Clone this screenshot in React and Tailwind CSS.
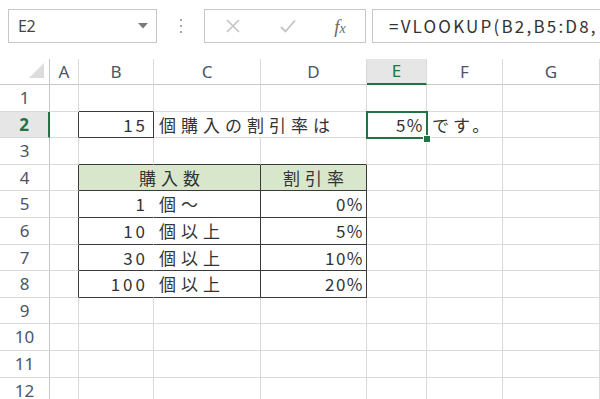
const DARK = 'border-r-[#3a3a3a]';
const cols = ['A', 'B', 'C', 'D', 'E', 'F', 'G'];

const cellFont = 'font-["Noto_Sans_CJK_JP",sans-serif] text-[17px] text-[#333]';

const Cell = ({ children, r = 'grid', b = 'grid', className = '' }) => {
  const rc = r === 'dark' ? DARK : r === 'none' ? 'border-r-white' : 'border-r-[#dadada]';
  const bc = b === 'dark' ? 'border-b-[#3a3a3a]' : 'border-b-[#dadada]';
  return (
    <div className={`flex items-center whitespace-nowrap overflow-visible border-r border-b ${rc} ${bc} ${cellFont} ${className}`}>
      {children}
    </div>
  );
};

const RowHead = ({ n, active }) => (
  <div
    className={`flex items-center justify-center border-b border-b-[#dadada] font-["Noto_Sans",sans-serif] text-[17px] ${
      active
        ? 'bg-[#e6e6e6] border-r-2 border-r-[#217346] text-[#217346] font-bold'
        : 'border-r border-r-[#c6c6c6] text-[#4a5568]'
    }`}
  >
    {n}
  </div>
);

const tiers = [
  ['1', '個〜', '0%'],
  ['10', '個以上', '5%'],
  ['30', '個以上', '10%'],
  ['100', '個以上', '20%'],
];

export default function App() {
  return (
    <div className="w-[600px] h-[399px] overflow-hidden bg-white">
      {/* Formula bar */}
      <div className="h-[59px] flex items-start pt-[9px] pl-2">
        <div className="w-[149px] h-[34px] border border-[#c6c6c6] flex items-center justify-between pl-[9px] pr-[8px]">
          <span className='font-["Noto_Sans",sans-serif] text-[16px] text-[#444] tracking-[-0.5px]'>E2</span>
          <svg width="10" height="6" viewBox="0 0 10 6">
            <path d="M0 0H10L5 5.5Z" fill="#7a7a7a" />
          </svg>
        </div>
        <div className="w-[47px] h-[34px] flex flex-col items-center justify-center gap-[4px]">
          <span className="w-[2px] h-[2px] bg-[#a8a8a8]" />
          <span className="w-[2px] h-[2px] bg-[#a8a8a8]" />
          <span className="w-[2px] h-[2px] bg-[#a8a8a8]" />
        </div>
        <div className="w-[162px] h-[34px] border border-[#c6c6c6] flex items-center">
          <div className="w-[56px] flex justify-center">
            <svg width="14" height="14" viewBox="0 0 14 14">
              <path d="M1 1L13 13M13 1L1 13" stroke="#c4c4c4" strokeWidth="1.6" />
            </svg>
          </div>
          <div className="w-[54px] flex justify-center">
            <svg width="16" height="14" viewBox="0 0 16 14">
              <path d="M1 8L5.5 12.5L15 1.5" stroke="#c4c4c4" strokeWidth="1.8" fill="none" />
            </svg>
          </div>
          <div className="w-[50px] flex justify-center">
            <span className='font-["Liberation_Serif",serif] italic text-[19px] text-[#6a6a6a] leading-none'>
              f<span className="text-[14px]">x</span>
            </span>
          </div>
        </div>
        <div className="ml-[6px] flex-1 h-[34px] border border-r-0 border-[#c6c6c6] flex items-center pl-[16px] overflow-hidden">
          <span className='whitespace-nowrap font-["Noto_Sans_CJK_JP",sans-serif] text-[17px] tracking-[2.2px] text-[#333]'>
            =VLOOKUP(B2,B5:D8,
          </span>
        </div>
      </div>

      {/* Sheet */}
      <div className="relative grid grid-cols-[50px_29px_75px_107px_106px_60px_76px_1fr] grid-rows-[26px_repeat(12,26.6px)]">
        {/* column headers */}
        <div className="relative border-r border-r-[#c6c6c6] border-b border-b-[#c6c6c6]">
          <svg className="absolute right-[5px] bottom-[6px]" width="15" height="15" viewBox="0 0 15 15">
            <path d="M15 0V15H0Z" fill="#dcdcdc" />
          </svg>
        </div>
        {cols.map((c) => (
          <div
            key={c}
            className={`flex items-center justify-center font-["Noto_Sans",sans-serif] text-[17px] border-r border-r-[#dadada] ${
              c === 'E'
                ? 'bg-[#e6e6e6] text-[#217346] border-b-2 border-b-[#217346]'
                : 'text-[#4a5568] border-b border-b-[#c6c6c6]'
            }`}
          >
            {c}
          </div>
        ))}

        {/* row 1 */}
        <RowHead n={1} />
        <Cell />
        <Cell b="dark" />
        <Cell />
        <Cell />
        <Cell />
        <Cell />
        <Cell />

        {/* row 2 */}
        <RowHead n={2} active />
        <Cell r="dark" />
        <Cell r="dark" b="dark" className="justify-end pr-[5px] tracking-[3px]">15</Cell>
        <Cell className="col-span-2 pl-[5px] tracking-[5px]">個購入の割引率は</Cell>
        <Cell className="justify-end pr-[2px] tracking-[1.5px]">5%</Cell>
        <Cell className="pl-[5px] tracking-[4px]">です。</Cell>
        <Cell />

        {/* row 3 */}
        <RowHead n={3} />
        <Cell />
        <Cell b="dark" />
        <Cell b="dark" />
        <Cell b="dark" />
        <Cell />
        <Cell />
        <Cell />

        {/* row 4 */}
        <RowHead n={4} />
        <Cell r="dark" />
        <Cell r="dark" b="dark" className="col-span-2 justify-center bg-[#d8e7cc] tracking-[5px] pl-[5px]">購入数</Cell>
        <Cell r="dark" b="dark" className="justify-center bg-[#d8e7cc] tracking-[5px] pl-[5px]">割引率</Cell>
        <Cell />
        <Cell />
        <Cell />

        {/* rows 5-8 */}
        {tiers.map(([qty, unit, rate], i) => (
          <div key={qty} className="contents">
            <RowHead n={5 + i} />
            <Cell r="dark" />
            <Cell r="none" b="dark" className="justify-end pr-[5px] tracking-[3px]">{qty}</Cell>
            <Cell r="dark" b="dark" className="pl-[5px] tracking-[5px]">{unit}</Cell>
            <Cell r="dark" b="dark" className="justify-end pr-[2px] tracking-[1.5px]">{rate}</Cell>
            <Cell />
            <Cell />
            <Cell />
          </div>
        ))}

        {/* rows 9-12 */}
        {[9, 10, 11, 12].map((n) => (
          <div key={n} className="contents">
            <RowHead n={n} />
            <Cell />
            <Cell />
            <Cell />
            <Cell />
            <Cell />
            <Cell />
            <Cell />
          </div>
        ))}

        {/* selection */}
        <div className="absolute left-[366px] top-[51.6px] w-[62px] h-[28.6px] border-2 border-[#217346] pointer-events-none" />
        <div className="absolute left-[423px] top-[76px] w-[8px] h-[8px] bg-[#217346] border border-white pointer-events-none" />
      </div>
    </div>
  );
}
